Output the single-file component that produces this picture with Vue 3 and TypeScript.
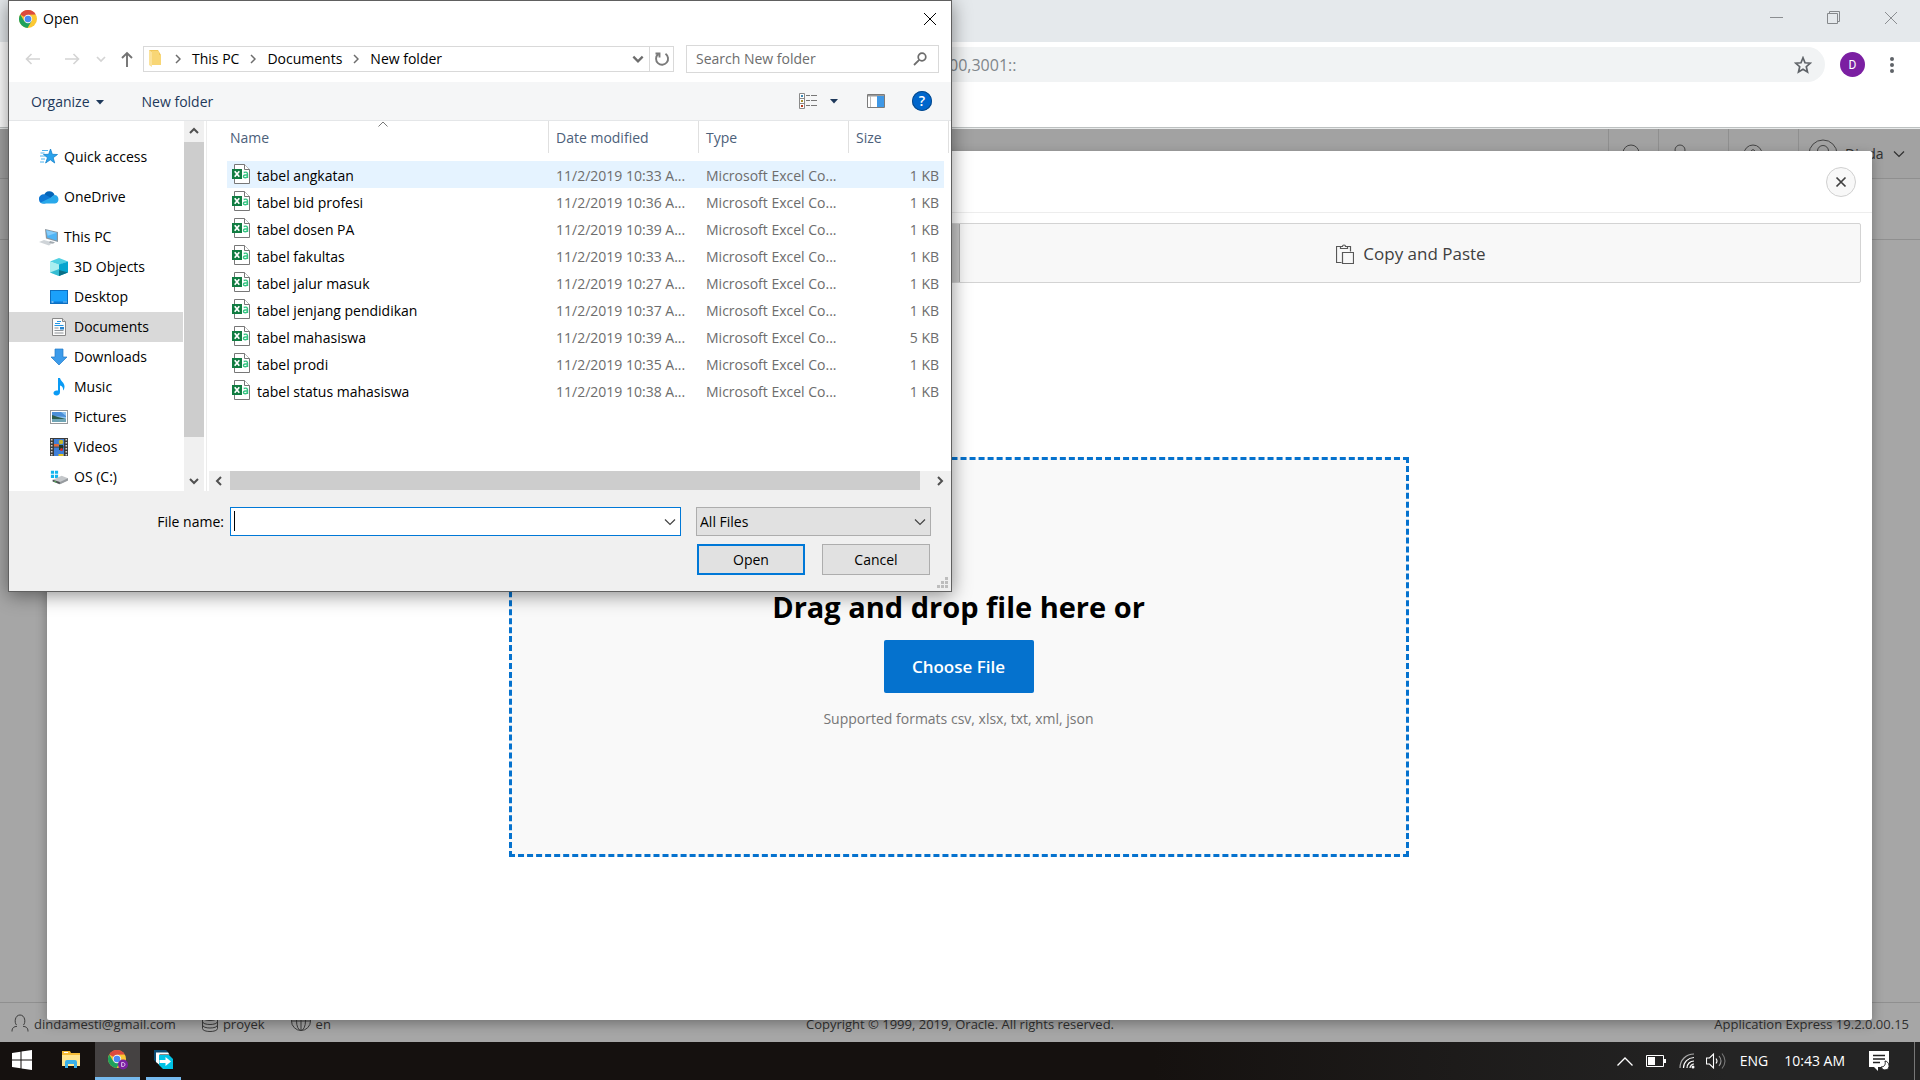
<script setup lang="ts">
import { ref } from 'vue'

interface Place {
  label: string
  icon: string
  root?: boolean
  selected?: boolean
}

interface FileRow {
  name: string
  modified: string
  size: string
}

const places: Place[] = [
  { label: 'Quick access', icon: 'star', root: true },
  { label: 'OneDrive', icon: 'cloud', root: true },
  { label: 'This PC', icon: 'pc', root: true },
  { label: '3D Objects', icon: 'cube' },
  { label: 'Desktop', icon: 'desktop' },
  { label: 'Documents', icon: 'documents', selected: true },
  { label: 'Downloads', icon: 'downloads' },
  { label: 'Music', icon: 'music' },
  { label: 'Pictures', icon: 'pictures' },
  { label: 'Videos', icon: 'videos' },
  { label: 'OS (C:)', icon: 'drive' },
]

const files: FileRow[] = [
  { name: 'tabel angkatan', modified: '11/2/2019 10:33 A...', size: '1 KB' },
  { name: 'tabel bid profesi', modified: '11/2/2019 10:36 A...', size: '1 KB' },
  { name: 'tabel dosen PA', modified: '11/2/2019 10:39 A...', size: '1 KB' },
  { name: 'tabel fakultas', modified: '11/2/2019 10:33 A...', size: '1 KB' },
  { name: 'tabel jalur masuk', modified: '11/2/2019 10:27 A...', size: '1 KB' },
  { name: 'tabel jenjang pendidikan', modified: '11/2/2019 10:37 A...', size: '1 KB' },
  { name: 'tabel mahasiswa', modified: '11/2/2019 10:39 A...', size: '5 KB' },
  { name: 'tabel prodi', modified: '11/2/2019 10:35 A...', size: '1 KB' },
  { name: 'tabel status mahasiswa', modified: '11/2/2019 10:38 A...', size: '1 KB' },
]

const crumbs = ['This PC', 'Documents', 'New folder']
const address = ref('00,3001::')
const fileName = ref('')
const active = ref(0)
</script>

<template>
  <div class="screen">
    <svg class="sprite" aria-hidden="true">
      <symbol id="i-chrome" viewBox="0 0 18 18">
        <circle cx="9" cy="9" r="9" fill="#fbc834" />
        <path d="M9 9 1.2 4.500A9 9 0 0 1 16.800 4.500L9 4.800Z" fill="#dd4b3e" />
        <path d="M1.200 4.500A9 9 0 0 0 8.500 18L12.500 11.200 5.300 11.200Z" fill="#1fa15d" />
        <circle cx="9" cy="9" r="4.200" fill="#f4f4f4" />
        <circle cx="9" cy="9" r="3.300" fill="#4a8af4" />
      </symbol>
      <symbol id="i-star" viewBox="0 0 20 18">
        <path d="M11.500 1l1.800 5.300 5.200.2-4.300 3.200 1.500 5.300-4.400-3.200-4.700 3.200 1.900-5.300L4.500 6.500l5.200-.2z" fill="#2ba3ec" stroke="#1481cc" stroke-width=".8" />
        <path d="M3 2.500h6M1.500 5h4M1 8h5M2 11h4M1 14h4" stroke="#4fb3ee" stroke-width="1" />
      </symbol>
      <symbol id="i-cloud" viewBox="0 0 20 14">
        <path d="M5 5.500A5.500 5.500 0 0 1 15.500 5L11 9 4 8z" fill="#0364b8" />
        <path d="M0 9.500A4.500 4.500 0 0 1 6.500 4.800L14 9 6 13.500H4.200A4.200 4.200 0 0 1 0 9.500z" fill="#0f78d4" />
        <path d="M15.500 5a4.300 4.300 0 0 1 .5 8.500H4.200c-.9 0-1.800-.4-2.500-1L12 7.500c1-.9 2-2.200 3.500-2.500z" fill="#28a8ea" />
      </symbol>
      <symbol id="i-pc" viewBox="0 0 20 18">
        <path d="M6 1l13 3v10L7 10.500z" fill="#8a959e" />
        <path d="M7.200 2.300l10.600 2.500v7.600L8.200 9.600z" fill="#4fb4f5" />
        <path d="M7.200 2.300l10.600 2.500-9 3z" fill="#86cdfb" />
        <path d="M0 14l5-2 9 2.500-4 3z" fill="#cfd4d8" />
        <path d="M11 13l5 1.200-2 1.500-4-1z" fill="#a3abb2" />
      </symbol>
      <symbol id="i-cube" viewBox="0 0 18 18">
        <path d="M0 3.500 9 0l9 3.500L9 7z" fill="#4fd0e2" />
        <path d="M0 3.500 9 6.500V18L0 14.500z" fill="#a9eef0" />
        <path d="M18 3.500 9 6.500V18l9-3.500z" fill="#06a5cf" />
        <path d="M0 14.500 9 11v7z" fill="#35bcd2" />
        <path d="M9 12l9 2.500L9 18z" fill="#0a6f86" />
      </symbol>
      <symbol id="i-desktop" viewBox="0 0 18 14">
        <rect x=".5" y=".5" width="17" height="13" fill="#1ba1fb" stroke="#0e6fc0" />
        <path d="M1 11.500h16V13H1z" fill="#0b7ad6" />
        <path d="M1.500 12h2M13.500 12h1M15.500 12h1" stroke="#d6efff" />
      </symbol>
      <symbol id="i-documents" viewBox="0 0 18 18">
        <path d="M2.500 .5h10l3 3v14h-13z" fill="#fbfbfb" stroke="#888" />
        <path d="M12.500 .5v3h3" fill="#ddd" stroke="#888" />
        <path d="M7 3.500h4M5 5.500h5M4.500 7.500h9" fill="none" stroke="#2196e6" stroke-width="1.200" />
        <path d="M4.500 10h4M4.500 12.500h9M4.500 15h9" fill="none" stroke="#8f9499" />
        <path d="M10 9h4v2.500h-4z" fill="#2a86cf" />
      </symbol>
      <symbol id="i-downloads" viewBox="0 0 18 18">
        <path d="M5 1h8v8h4l-8 8-8-8h4z" fill="#3c9bea" stroke="#2079c7" stroke-width=".7" />
      </symbol>
      <symbol id="i-music" viewBox="0 0 18 18">
        <path d="M8 0h2c.5 3 4.500 4.500 4.500 8.500 0 1.500-.5 3-1.500 4 .5-3-1-4.500-3-5V14c0 2-1.500 3.500-3.500 3.500S3.500 16.500 3.500 15 5 12.500 6.500 12.500H8z" fill="#0a9bf5" />
      </symbol>
      <symbol id="i-pictures" viewBox="0 0 18 14">
        <rect x=".5" y=".5" width="17" height="13" fill="#fff" stroke="#96999c" />
        <path d="M2 2h14v10H2z" fill="#8fc4ef" />
        <path d="M2 2h9l5 4v1L2 6z" fill="#4b8fd8" />
        <path d="M2 5l6 2 8 2H2z" fill="#2c5d4c" />
        <path d="M2 9h14v3H2z" fill="#6fa5b5" />
      </symbol>
      <symbol id="i-videos" viewBox="0 0 18 18">
        <path d="M0 0h18v18H0z" fill="#3b3b3b" />
        <path d="M4 1h10v7.500H4zM4 9.500h10V18H4z" fill="#3f7fd8" />
        <path d="M1.700 1v17M16.300 1v17" stroke="#d5d5d5" stroke-width="1.600" stroke-dasharray="1.500 1.500" />
        <circle cx="11" cy="4" r="2.300" fill="#c7b72c" />
        <path d="M4 6h5v2.500H4z" fill="#e06a3a" />
        <path d="M9 7h4v5H9z" fill="#243a24" />
        <circle cx="11.500" cy="11.500" r="1.500" fill="#cf3030" />
        <path d="M8.500 16h5v2h-5z" fill="#e8c320" />
      </symbol>
      <symbol id="i-drive" viewBox="0 0 20 16">
        <path d="M1 1h3.500v3.500H1zM5.500 1H9v3.500H5.500zM1 5.500h3.500V9H1zM5.500 5.500H9V9H5.500z" fill="#12b5ee" />
        <path d="M3 11l10-4.500 7 3v2.500l-9 4-8-3z" fill="#c4c7ca" />
        <path d="M3 11l8 2.500V16l-8-3z" fill="#4b4f52" />
        <path d="M11 13.500l9-4v2.500l-9 4z" fill="#979b9f" />
        <path d="M5 13l2 .7" stroke="#5ee05e" />
      </symbol>
      <symbol id="i-excel" viewBox="0 0 18 20">
        <path d="M2.500 .5h10l5 5v14h-15z" fill="#fff" stroke="#777" />
        <path d="M12.500 .5v5h5" fill="#fff" stroke="#777" />
        <path d="M0 5h10v10H0z" fill="#107c41" />
        <path d="M2.700 7.200l4.600 5.600M7.300 7.200l-4.600 5.600" stroke="#fff" stroke-width="1.700" />
        <path d="M11.700 8.500c3-1 3.800 0 3.800 1.500v4M15.500 10.800c-2.500 0-4 .3-4 1.700 0 1.800 3.200 1.700 4-.3" fill="none" stroke="#33c481" stroke-width="1.400" />
      </symbol>
      <symbol id="i-user" viewBox="0 0 18 18">
        <path d="M5.500 11C3 8.500 4 1 9 1s6 7.500 3.500 10M1 17.500c0-4 2-4.800 5-5.200M17 17.500c0-4-2-4.800-5-5.200" fill="none" stroke="currentColor" />
      </symbol>
      <symbol id="i-down" viewBox="0 0 12 8">
        <path d="M1 1.500l5 5 5-5" fill="none" stroke="currentColor" stroke-width="1.200" />
      </symbol>
      <symbol id="i-chev" viewBox="0 0 12 12">
        <path d="M2 4l4 4 4-4" fill="none" stroke="currentColor" stroke-width="2" />
      </symbol>
      <symbol id="i-crumb" viewBox="0 0 6 10">
        <path d="M1 1l4 4-4 4" fill="none" stroke="#6d6d6d" stroke-width="1.500" />
      </symbol>
      <symbol id="i-x" viewBox="0 0 14 14">
        <path d="M1 1l12 12M13 1L1 13" fill="none" stroke="currentColor" />
      </symbol>
    </svg>

    <!-- browser chrome -->
    <header class="browser">
      <div class="titlebar">
        <button type="button" aria-label="Minimize"><svg width="14" height="14"><path d="M0 6.500h13" stroke="#8b8e91" /></svg></button>
        <button type="button" aria-label="Restore"><svg width="14" height="14"><path d="M.5 2.500h10v10H.5zM2.500 2V.5h10v10H11" fill="none" stroke="#85888b" /></svg></button>
        <button type="button" aria-label="Close window"><svg width="14" height="14"><use href="#i-x" /></svg></button>
      </div>
      <div class="toolbar">
        <div class="omnibox">
          <input v-model="address" type="text" aria-label="Address" />
          <button type="button" aria-label="Bookmark">
            <svg width="18" height="18" viewBox="0 0 18 18"><path d="M9 1.800l2 5 5.300.4-4 3.500 1.200 5.300L9 13.200 4.500 16l1.200-5.300-4-3.500 5.300-.4z" fill="none" stroke="#5f6368" stroke-width="1.700" /></svg>
          </button>
        </div>
        <button class="profile" type="button">D</button>
        <button class="dots" type="button" aria-label="Menu">
          <svg width="4" height="18"><circle cx="2" cy="3" r="2" /><circle cx="2" cy="9" r="2" /><circle cx="2" cy="15" r="2" /></svg>
        </button>
      </div>
    </header>

    <!-- dimmed application page -->
    <main class="page">
      <nav class="app-bar">
        <a href="#" class="bar-cell search" aria-label="Search"><svg width="20" height="20"><circle cx="9" cy="9" r="8" /></svg></a>
        <a href="#" class="bar-cell admin" aria-label="Administration"><svg width="20" height="20"><circle cx="8" cy="6" r="5" /></svg></a>
        <a href="#" class="bar-cell help" aria-label="Help"><svg width="20" height="20"><circle cx="9" cy="10" r="9" /><path d="M7 7q2-3 4 0" /></svg></a>
        <a href="#" class="bar-cell account">
          <svg width="30" height="30"><circle cx="15" cy="15" r="14" /><circle cx="15" cy="12" r="5.500" /></svg>
          <span>Dinda</span>
          <svg width="12" height="8"><use href="#i-down" /></svg>
        </a>
      </nav>
      <div class="crumb-bar"></div>
      <div class="canvas"></div>
      <footer class="app-foot">
        <div class="foot-left">
          <svg width="18" height="18"><use href="#i-user" /></svg><span>dindamesti@gmail.com</span>
          <svg class="db" width="16" height="18" viewBox="0 0 16 18"><ellipse cx="8" cy="3.500" rx="7.500" ry="3" /><path d="M.5 3.500v11c0 4 15 4 15 0v-11M.5 7.500c0 4 15 4 15 0M.5 11c0 4 15 4 15 0" /></svg><span>proyek</span>
          <svg class="globe" width="20" height="18" viewBox="0 0 20 18"><circle cx="10" cy="7" r="9.500" /><ellipse cx="10" cy="7" rx="4.500" ry="9.500" /><path d="M.5 7h19M10-3v19" /></svg><span>en</span>
        </div>
        <div class="foot-mid">Copyright © 1999, 2019, Oracle. All rights reserved.</div>
        <div class="foot-right">Application Express 19.2.0.00.15</div>
      </footer>

      <section class="modal">
        <div class="modal-head">
          <button type="button" aria-label="Close"><svg width="12" height="12" viewBox="0 0 12 12"><path d="M1.500 1.500l9 9M10.500 1.500l-9 9" stroke="#404040" stroke-width="1.700" /></svg></button>
        </div>
        <div class="tabs">
          <button type="button" class="pressed" aria-label="Upload a File"></button>
          <button type="button">
            <svg width="18" height="20" viewBox="0 0 18 20"><path d="M4.500 2.500h-4v16h5M10.500 2.500h4v5M6.500 8.500h11v11h-11zM4.500 4.500v-2h2c0-2 3-2 3 0h2v2z" fill="none" stroke="#585858" stroke-width="1.200" /></svg>
            Copy and Paste
          </button>
        </div>
        <div class="modal-body">
          <div class="dropzone">
            <h1>Drag and drop file here or</h1>
            <button type="button">Choose File</button>
            <p>Supported formats csv, xlsx, txt, xml, json</p>
          </div>
        </div>
      </section>
    </main>

    <!-- taskbar -->
    <footer class="taskbar">
      <button class="start" type="button" aria-label="Start"><svg width="20" height="20" viewBox="0 0 20 20"><path d="M0 3l8.500-1.300v7.800H0zM9.500 1.500L20 0v9.500H9.500zM0 10.500h8.500v7.800L0 17zM9.500 10.500H20V20L9.500 18.500z" fill="#fff" /></svg></button>
      <button class="explorer" type="button" aria-label="File Explorer"><svg width="18" height="17" viewBox="0 0 18 17"><path d="M0 0h8l1 2h9v13H0z" fill="#f5bc37" /><path d="M0 4h18v11H0z" fill="#ffe58f" /><path d="M2 1.500h4" stroke="#fff" /><path d="M3 17v-6q0-2 2-2h8q2 0 2 2v6h-3v-4H6v4z" fill="#3bb0e8" /></svg></button>
      <button class="chrome" type="button" aria-label="Google Chrome">
        <svg width="20" height="20" viewBox="0 0 20 20"><use href="#i-chrome" width="18" height="18" /><circle cx="15" cy="14.500" r="5" fill="#7b1fa2" /><path d="M13.700 12.500h1c3 0 3 4 0 4h-1z" fill="none" stroke="#e6cfef" /></svg>
      </button>
      <button class="share" type="button" aria-label="Share"><svg width="20" height="20" viewBox="0 0 20 20"><path d="M0 0h12l3 3H3v10L0 10z" fill="#0a4a72" /><path d="M2 2.500h12l1.500 2H5.500V15L2 12z" fill="#fff" /><path d="M5 5h10l4 4v10H9l-4-4z" fill="#00c3e6" /><path d="M5.500 10h6V7l5.500 4.500-5.500 4.500v-3h-6z" fill="#fff" /></svg></button>
      <div class="tray">
        <svg width="16" height="9"><path d="M.5 8.500L8 1l7.500 7.500" fill="none" stroke="#fff" stroke-width="1.300" /></svg>
        <svg class="battery" width="20" height="12"><path d="M.5 .5h17v11H.5z" fill="none" stroke="#fff" /><path d="M2 2h7v8H2zM18 4h2v4h-2z" fill="#fff" /></svg>
        <svg class="wifi" width="16" height="16"><g fill="none" stroke="#fff" stroke-width="1.200"><path d="M1 15C1 7 7 1 15 1" stroke="#aaa" /><path d="M4.500 15C4.500 9 9 4.800 15 4.500" /><path d="M8 15c0-4 3-7 7-7" /><path d="M11 15c0-2 2-4 4-4" /></g><circle cx="14" cy="14" r="1.500" fill="#fff" /></svg>
        <svg class="volume" width="20" height="18"><g fill="none" stroke="#fff" stroke-width="1.100"><path d="M.5 6h3l4-4v14l-4-4h-3z" /><path d="M10 6.500q2 2.500 0 5" /><path d="M13 4q4 5 0 10" stroke="#999" /><path d="M16 1.500q6 7.500 0 15" stroke="#777" /></g></svg>
        <span class="lang">ENG</span>
        <span class="time">10:43 AM</span>
        <svg class="note" width="21" height="20" viewBox="0 0 21 20"><path d="M0 0h20v16H9v4l-4-4H0z" fill="#fff" /><path d="M4 4.500h12M4 8h12M4 11.500h7" stroke="#222" stroke-width="1.300" /><path d="M16 10c1 4-1 6-4 6 2 5 9 3 8-2-.500-2-2-4-4-4z" fill="#fff" stroke="#222" /></svg>
        <i></i>
      </div>
    </footer>

    <!-- file picker -->
    <section class="dialog" role="dialog" aria-label="Open">
      <div class="dlg-title">
        <svg width="18" height="18"><use href="#i-chrome" /></svg>
        <span>Open</span>
        <button type="button" aria-label="Close dialog"><svg width="14" height="14"><use href="#i-x" /></svg></button>
      </div>

      <div class="dlg-nav">
        <button type="button" aria-label="Back"><svg width="16" height="12"><path d="M15 6H2M6.500 1L1.500 6l5 5" fill="none" stroke="#d4d4d4" stroke-width="1.600" /></svg></button>
        <button class="forward" type="button" aria-label="Forward"><svg width="16" height="12"><path d="M1 6h13M9.500 1l5 5-5 5" fill="none" stroke="#d4d4d4" stroke-width="1.600" /></svg></button>
        <button class="recent" type="button" aria-label="Recent"><svg width="10" height="10"><path d="M1 3l4 4 4-4" fill="none" stroke="#d4d4d4" stroke-width="1.700" /></svg></button>
        <button class="up" type="button" aria-label="Up"><svg width="12" height="16"><path d="M6 16V2M1 7l5-5 5 5" fill="none" stroke="#737373" stroke-width="1.900" /></svg></button>
        <div class="address">
          <svg class="folder" width="13" height="18"><path d="M0 0h9l3 5v10H3z" fill="#f0c658" /><path d="M0 0l3 2v15l-3-2z" fill="#fbe29a" /><path d="M3 1h7v4h2v10H3z" fill="#f8d675" /></svg>
          <template v-for="crumb in crumbs" :key="crumb">
            <svg width="6" height="10"><use href="#i-crumb" /></svg>
            <a href="#">{{ crumb }}</a>
          </template>
          <button class="history" type="button" aria-label="Previous locations"><svg width="14" height="14"><use href="#i-chev" /></svg></button>
          <button class="reload" type="button" aria-label="Refresh"><svg width="16" height="16" viewBox="0 0 16 16"><path d="M11.500 2.800A6 6 0 1 1 4 3.300M1.500 2.500h4v4" fill="none" stroke="#7a7a7a" stroke-width="1.900" /></svg></button>
        </div>
        <div class="find">
          <input type="text" placeholder="Search New folder" aria-label="Search New folder" />
          <svg width="14" height="14"><circle cx="9" cy="5" r="3.800" fill="none" stroke="#6d6d6d" stroke-width="1.700" /><path d="M6.200 7.800L1 13" stroke="#6d6d6d" stroke-width="1.800" /></svg>
        </div>
      </div>

      <div class="dlg-tools">
        <button type="button" class="text">Organize <svg width="8" height="5"><path d="M0 0h8L4 4.500z" fill="#1e395b" /></svg></button>
        <button type="button" class="text newf">New folder</button>
        <button type="button" class="view" aria-label="View"><svg width="18" height="16"><path d="M.5 .5h5v15h-5zM.5 5.500h5M.5 10.500h5" fill="#fff" stroke="#8a8a8a" /><path d="M2 2h2v2H2z" fill="#3d88b5" /><path d="M2 7h2v2H2z" fill="#a89231" /><path d="M2 12h2v2H2z" fill="#b53c1e" /><path d="M7 2.500h4M12 2.500h6M7 7.500h4M12 7.500h6M7 12.500h4M12 12.500h6" stroke="#777" /></svg></button>
        <button type="button" class="more" aria-label="More views"><svg width="8" height="5"><path d="M0 0h8L4 4.500z" fill="#1e395b" /></svg></button>
        <button type="button" class="pane" aria-label="Preview pane"><svg width="18" height="14"><path d="M.5 .5h17v13H.5z" fill="#fff" stroke="#7b7b7b" /><path d="M1 1h16v1.500H1z" fill="#9a9a9a" /><path d="M3.500 2v11" stroke="#bbb" /><path d="M10 2h7v11h-7z" fill="#3f98e6" /></svg></button>
        <button type="button" class="ask" aria-label="Get help">?</button>
      </div>

      <div class="dlg-main">
        <ul class="places">
          <li v-for="place in places" :key="place.label" :class="{ root: place.root, selected: place.selected }">
            <svg><use :href="'#i-' + place.icon" /></svg>
            <a href="#">{{ place.label }}</a>
          </li>
        </ul>
        <div class="vbar">
          <svg width="12" height="12" class="flip"><use href="#i-chev" /></svg>
          <div class="vthumb"></div>
          <svg width="12" height="12"><use href="#i-chev" /></svg>
        </div>
        <div class="list">
          <div class="rows">
            <table>
              <colgroup><col class="c-name" /><col class="c-mid" /><col class="c-mid" /><col class="c-size" /></colgroup>
              <thead>
                <tr>
                  <th scope="col" class="sorted">Name<svg width="10" height="6"><path d="M.5 5.500L5 1l4.500 4.500" fill="none" stroke="#777" /></svg></th>
                  <th scope="col">Date modified</th>
                  <th scope="col">Type</th>
                  <th scope="col">Size</th>
                </tr>
              </thead>
              <tbody>
                <tr v-for="(file, i) in files" :key="file.name" :class="{ hot: i === active }" @mouseenter="active = i">
                  <td><div class="file"><svg width="18" height="20"><use href="#i-excel" /></svg>{{ file.name }}</div></td>
                  <td>{{ file.modified }}</td>
                  <td>Microsoft Excel Co...</td>
                  <td>{{ file.size }}</td>
                </tr>
              </tbody>
            </table>
          </div>
          <div class="hbar">
            <svg width="12" height="12" class="left"><use href="#i-chev" /></svg>
            <div class="hthumb"></div>
            <svg width="12" height="12" class="right"><use href="#i-chev" /></svg>
          </div>
        </div>
      </div>

      <div class="dlg-foot">
        <div class="foot-row">
          <label for="file-name">File name:</label>
          <div class="combo name">
            <input id="file-name" v-model="fileName" type="text" />
            <span class="caret"></span>
            <svg width="12" height="8"><use href="#i-down" /></svg>
          </div>
          <div class="combo kind">
            <select aria-label="File type"><option>All Files</option></select>
            <svg width="12" height="8"><use href="#i-down" /></svg>
          </div>
        </div>
        <div class="foot-row actions">
          <button type="button" class="primary">Open</button>
          <button type="button">Cancel</button>
        </div>
        <svg class="grip" width="11" height="11"><path d="M8 0h3v3H8zM4 4h3v3H4zM8 4h3v3H8zM0 8h3v3H0zM4 8h3v3H4zM8 8h3v3H8z" fill="#bdbdbd" /></svg>
      </div>
    </section>
  </div>
</template>

<style>
body {
  margin: 0;
  overflow: hidden;
}
</style>

<style scoped>
* {
  box-sizing: border-box;
}
.screen {
  position: relative;
  display: flex;
  flex-direction: column;
  height: 100vh;
  overflow: hidden;
  font: 14px/20px 'Open Sans', 'Noto Sans', sans-serif;
  color: #000;
  background: #fff;
}
.sprite {
  position: absolute;
  width: 0;
  height: 0;
}
svg {
  display: block;
  flex: none;
}
button,
input,
select {
  font: inherit;
  color: inherit;
  border: 0;
  padding: 0;
  margin: 0;
  background: none;
  outline: 0;
  border-radius: 0;
}
button {
  display: flex;
  align-items: center;
  justify-content: center;
}
a {
  color: inherit;
  text-decoration: none;
}

/* browser */
.browser {
  height: 129px;
  border-bottom: 1px solid #e8eaea;
  box-shadow: inset 0 -1px #bcc0c0;
}
.titlebar {
  display: flex;
  justify-content: flex-end;
  height: 42px;
  padding: 0 1px 6px 0;
  background: #e5e9ec;
  color: #8b8e91;
}
.titlebar button {
  width: 57px;
}
.toolbar {
  display: flex;
  align-items: center;
  height: 45px;
  padding: 0 24px 0 120px;
}
.omnibox {
  display: flex;
  flex: 1;
  height: 35px;
  padding-right: 13px;
  border-radius: 18px;
  background: #f1f3f4;
}
.omnibox input {
  flex: 1;
  padding-left: 829px;
  font-size: 16px;
  color: #80868b;
}
.profile {
  width: 25px;
  height: 25px;
  margin: 0 23px 0 15px;
  border-radius: 50%;
  background: #7b1fa2;
  color: #fff;
  font: 12px/16px Roboto, sans-serif;
}
.dots {
  width: 8px;
  fill: #5f6368;
}

/* dimmed page */
.page {
  position: relative;
  display: flex;
  flex: 1;
  flex-direction: column;
  min-height: 0;
  background: #a6a6a6;
  color: #303030;
}
.app-bar {
  display: flex;
  justify-content: flex-end;
  height: 50px;
  background: #a2a2a2;
  border-bottom: 1px solid #8f8f8f;
}
.bar-cell {
  display: flex;
  align-items: center;
  padding: 0 13px;
  border-left: 1px solid #8f8f8f;
}
.bar-cell circle,
.bar-cell path {
  fill: none;
  stroke: #444;
}
.search {
  width: 50px;
}
.admin {
  width: 70px;
}
.help {
  width: 70px;
  padding-left: 15px;
}
.account {
  width: 122px;
  padding: 0 9px;
}
.account span {
  margin: 0 auto 0 7px;
}
.account svg:last-child {
  margin-right: 6px;
}
.crumb-bar {
  height: 61px;
  border-bottom: 1px solid #8f8f8f;
}
.canvas {
  flex: 1;
}
.app-foot {
  display: grid;
  grid-template-columns: 1fr auto 1fr;
  height: 40px;
  padding: 11px 11px 0;
  border-top: 1px solid #8f8f8f;
  font-size: 13px;
}
.app-foot svg {
  fill: none;
  stroke: #3c3c3c;
}
.foot-left {
  display: flex;
  gap: 5px;
}
.foot-left svg {
  color: #3c3c3c;
}
.foot-left .db,
.foot-left .globe {
  margin-left: 21px;
}
.foot-right {
  text-align: right;
}

/* modal */
.modal {
  position: absolute;
  inset: 22px 48px 22px 47px;
  display: flex;
  flex-direction: column;
  background: #fff;
  border-radius: 2px;
  box-shadow: 0 4px 12px rgba(0, 0, 0, 0.3);
}
.modal-head {
  display: flex;
  align-items: center;
  justify-content: flex-end;
  height: 62px;
  padding-right: 16px;
  border-bottom: 1px solid #ededed;
}
.modal-head button {
  width: 30px;
  height: 30px;
  border: 1px solid #d0d0d0;
  border-radius: 50%;
  background: #f8f8f8;
}
.tabs {
  display: flex;
  height: 60px;
  margin: 10px 11px 0;
  border: 1px solid #d3d3d3;
  border-radius: 2px;
  background: #f8f8f8;
}
.tabs button {
  flex: 1;
  gap: 9px;
  padding: 2px 0 0 2px;
  font-size: 17px;
  color: #404040;
}
.tabs .pressed {
  background: #c8c8c8;
  border-right: 1px solid #aaa;
}
.modal-body {
  display: flex;
  flex: 1;
  align-items: center;
  justify-content: center;
  padding: 10px 2px 0 0;
}
.dropzone {
  display: flex;
  flex-direction: column;
  align-items: center;
  justify-content: center;
  gap: 14px;
  width: 900px;
  height: 400px;
  padding-top: 6px;
  border: 3px dashed #0572ce;
  background: #f9f9f9;
}
.dropzone h1 {
  margin: 0;
  font-size: 29px;
  line-height: 38px;
  color: #000;
}
.dropzone button {
  width: 150px;
  height: 53px;
  border-radius: 2px;
  background: #0572ce;
  color: #fff;
  font-size: 17px;
  font-weight: 600;
}
.dropzone p {
  margin: 0;
  line-height: 24px;
  color: #767676;
}

/* taskbar */
.taskbar {
  display: flex;
  height: 38px;
  background: linear-gradient(90deg, #15110f, #15110f 60%, #242424 90%);
  color: #fff;
}
.taskbar button {
  border-bottom: 3px solid transparent;
}
.taskbar .start {
  width: 44px;
}
.taskbar .explorer {
  width: 51px;
  padding-left: 3px;
}
.taskbar .chrome {
  width: 45px;
  background: #454242;
  border-color: #76b9ed;
}
.taskbar .share {
  width: 35px;
  margin-left: 6px;
  border-color: #76b9ed;
}
.tray {
  display: flex;
  align-items: center;
  margin-left: auto;
}
.battery,
.wifi {
  margin-left: 13px;
}
.volume {
  margin-left: 11px;
}
.lang {
  margin-left: 14px;
}
.time {
  margin-left: 16px;
}
.note {
  margin: 0 24px;
}
.tray i {
  width: 6px;
  height: 38px;
  border-left: 1px solid #777;
}

/* file picker */
.dialog {
  position: absolute;
  top: 0;
  left: 8px;
  display: flex;
  flex-direction: column;
  width: 944px;
  border: 1px solid #606060;
  background: #fff;
  box-shadow: 0 3px 18px rgba(0, 0, 0, 0.45);
}
.dlg-title {
  display: flex;
  align-items: center;
  height: 36px;
  padding: 0 14px 0 10px;
}
.dlg-title span {
  margin: 0 auto 0 6px;
}
.dlg-nav {
  display: flex;
  align-items: center;
  height: 45px;
  padding: 0 12px 1px 16px;
}
.dlg-nav .forward {
  margin-left: 23px;
}
.dlg-nav .recent {
  margin-left: 16px;
}
.dlg-nav .up {
  margin-left: 15px;
}
.address {
  display: flex;
  flex: 1;
  align-items: center;
  height: 26px;
  margin: 0 12px 0 10px;
  padding-left: 5px;
  border: 1px solid #d9d9d9;
}
.address .folder {
  margin-right: 13px;
}
.address a {
  margin: 0 11px;
}
.address .history {
  width: 22px;
  margin-left: auto;
  color: #6d6d6d;
}
.address .reload {
  width: 24px;
  height: 24px;
  border-left: 1px solid #d9d9d9;
}
.find {
  display: flex;
  align-items: center;
  width: 253px;
  height: 28px;
  padding: 0 11px 0 9px;
  border: 1px solid #d9d9d9;
}
.find input {
  flex: 1;
  min-width: 0;
}
.find input::placeholder {
  color: #6d6d6d;
  opacity: 1;
}
.dlg-tools {
  display: flex;
  align-items: center;
  height: 39px;
  padding: 0 19px 0 22px;
  border-bottom: 1px solid #e4e6e8;
  background: #f5f6f7;
  color: #1e395b;
}
.dlg-tools button {
  gap: 6px;
}
.dlg-tools .text {
  padding-top: 2px;
}
.dlg-tools .newf {
  margin-left: 38px;
}
.dlg-tools .view {
  margin-left: auto;
}
.dlg-tools .more {
  margin-left: 13px;
}
.dlg-tools .pane {
  margin-left: 29px;
}
.dlg-tools .ask {
  width: 20px;
  height: 20px;
  margin-left: 27px;
  border-radius: 50%;
  background: #0066cc;
  box-shadow: inset 0 0 0 1px #0a4a8a;
  color: #fff;
  font-weight: 600;
}
.dlg-main {
  display: flex;
  height: 370px;
}
.places {
  width: 174px;
  margin: 0;
  padding: 21px 0 0;
  overflow: hidden;
  list-style: none;
}
.places li {
  display: flex;
  align-items: center;
  gap: 6px;
  height: 30px;
  padding-left: 41px;
}
.places li svg {
  width: 18px;
  height: 18px;
}
.places .root {
  gap: 5px;
  padding-left: 30px;
}
.places .root svg {
  width: 20px;
}
.places .root + .root {
  margin-top: 10px;
}
.places .selected {
  background: #d9d9d9;
}
.vbar {
  display: flex;
  flex-direction: column;
  align-items: center;
  width: 20px;
  margin: 0 2px 0 1px;
  padding: 4px 0;
  background: #f0f0f0;
  color: #505050;
}
.vthumb {
  width: 20px;
  height: 295px;
  margin: 5px 0 auto;
  background: #cdcdcd;
}
.flip {
  transform: rotate(180deg);
}
.left {
  transform: rotate(90deg);
}
.right {
  transform: rotate(-90deg);
}
.list {
  display: flex;
  flex: 1;
  flex-direction: column;
  border-left: 1px solid #ececec;
}
.rows {
  flex: 1;
  padding-left: 20px;
}
table {
  width: 722px;
  table-layout: fixed;
  border-spacing: 0;
}
.c-name {
  width: 322px;
}
.c-mid {
  width: 150px;
}
th {
  position: relative;
  height: 32px;
  padding: 2px 0 0 7px;
  border-right: 1px solid #e0e0e0;
  text-align: left;
  font-weight: 400;
  color: #4c607a;
}
th:first-child {
  padding-left: 3px;
}
.sorted svg {
  position: absolute;
  top: 0;
  left: 47%;
}
tbody::before {
  content: '';
  display: block;
  height: 8px;
}
td {
  height: 27px;
  padding: 2px 0 0 7px;
  color: #6d6d6d;
  white-space: nowrap;
}
td:first-child {
  padding-left: 5px;
  color: #000;
}
td:last-child {
  padding-right: 5px;
  border-right: 5px solid transparent;
  background-clip: padding-box;
  text-align: right;
}
.hot td {
  background-color: #e5f3ff;
}
.file {
  display: flex;
  align-items: center;
  gap: 7px;
}
.file svg {
  margin: -4px 0 0;
}
.hbar {
  display: flex;
  align-items: center;
  height: 20px;
  margin-left: 2px;
  padding: 0 5px 1px 4px;
  background: #f0f0f0;
  color: #505050;
}
.hthumb {
  flex: 1;
  height: 19px;
  margin: 0 14px 0 5px;
  background: #cdcdcd;
}
.dlg-foot {
  position: relative;
  height: 100px;
  padding: 16px 20px 0 0;
  background: #f0f0f0;
}
.foot-row {
  display: flex;
  align-items: center;
  justify-content: flex-end;
}
.foot-row label {
  margin-right: 6px;
}
.combo {
  position: relative;
  height: 29px;
}
.combo.name {
  width: 451px;
  margin-right: 15px;
}
.combo.kind {
  width: 235px;
}
.combo input,
.combo select {
  width: 100%;
  height: 100%;
  padding: 0 3px;
  appearance: none;
  border: 1px solid #0078d7;
  background: #fff;
}
.combo select {
  border-color: #adadad;
  background: #e1e1e1;
}
.combo svg {
  position: absolute;
  top: 11px;
  right: 5px;
  color: #444;
}
.caret {
  position: absolute;
  top: 4px;
  left: 4px;
  width: 1px;
  height: 20px;
  background: #000;
}
.actions {
  gap: 17px;
  margin-top: 8px;
  padding-right: 1px;
}
.actions button {
  width: 108px;
  height: 31px;
  border: 1px solid #adadad;
  background: #e1e1e1;
}
.actions .primary {
  border: 2px solid #0078d7;
}
.grip {
  position: absolute;
  right: 3px;
  bottom: 3px;
}
</style>
